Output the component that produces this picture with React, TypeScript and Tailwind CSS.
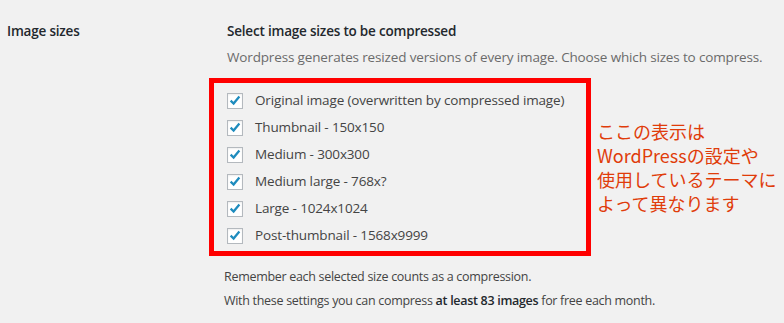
import React from "react";

const sizes = [
  "Original image (overwritten by compressed image)",
  "Thumbnail - 150x150",
  "Medium - 300x300",
  "Medium large - 768x?",
  "Large - 1024x1024",
  "Post-thumbnail - 1568x9999",
];

const CheckBox = () => (
  <span className="flex h-4 w-4 shrink-0 items-center justify-center border border-[#b4b9be] bg-white shadow-[inset_0_1px_2px_rgba(0,0,0,0.07)]">
    <svg viewBox="0 0 16 16" className="h-[15px] w-[15px]">
      <path
        d="M3 8.2 L6.4 11.4 L13 3.4"
        fill="none"
        stroke="#1e8cbe"
        strokeWidth="2.6"
        strokeLinecap="butt"
        strokeLinejoin="miter"
      />
    </svg>
  </span>
);

const App = () => {
  return (
    <div className="h-[323px] w-[784px] overflow-hidden bg-[#f1f1f1] font-['Open_Sans',sans-serif] text-[#444]">
      <div className="flex pt-[21px]">
        <div className="w-[227px] shrink-0 pl-[7px] text-[13.5px] font-semibold leading-[20px] tracking-[-0.2px] text-[#23282d]">
          Image sizes
        </div>
        <div className="flex flex-col">
          <div className="text-[13.5px] font-semibold leading-[20px] tracking-[-0.2px] text-[#23282d]">
            Select image sizes to be compressed
          </div>
          <div className="mt-[6px] whitespace-nowrap text-[13.5px] leading-[20px] tracking-[-0.15px] text-[#6b6b6b]">
            Wordpress generates resized versions of every image. Choose which sizes to compress.
          </div>
          <div className="mt-[11px] flex items-start">
            <div className="-ml-[18px] w-[382px] shrink-0 border-[5px] border-[#ff0000] pb-[2px] pl-[13px] pt-[4px]">
              {sizes.map((s) => (
                <div
                  key={s}
                  className="flex h-[27px] items-center gap-[12px] text-[13.5px] tracking-[-0.15px]"
                >
                  <CheckBox />
                  <span>{s}</span>
                </div>
              ))}
            </div>
            <div className="ml-[6px] mt-[41px] whitespace-nowrap font-['Noto_Sans_CJK_JP',sans-serif] text-[18px] leading-[24px] text-[#e03c0a]">
              <div>ここの表示は</div>
              <div>WordPressの設定や</div>
              <div>使用しているテーマに</div>
              <div>よって異なります</div>
            </div>
          </div>
          <div className="-ml-[3px] mt-[9px] whitespace-nowrap text-[12.5px] leading-[24px] tracking-[-0.3px]">
            <div>Remember each selected size counts as a compression.</div>
            <div>
              With these settings you can compress{" "}
              <span className="font-semibold text-[#23282d]">at least 83 images</span> for free each
              month.
            </div>
          </div>
        </div>
      </div>
    </div>
  );
};

export default App;
